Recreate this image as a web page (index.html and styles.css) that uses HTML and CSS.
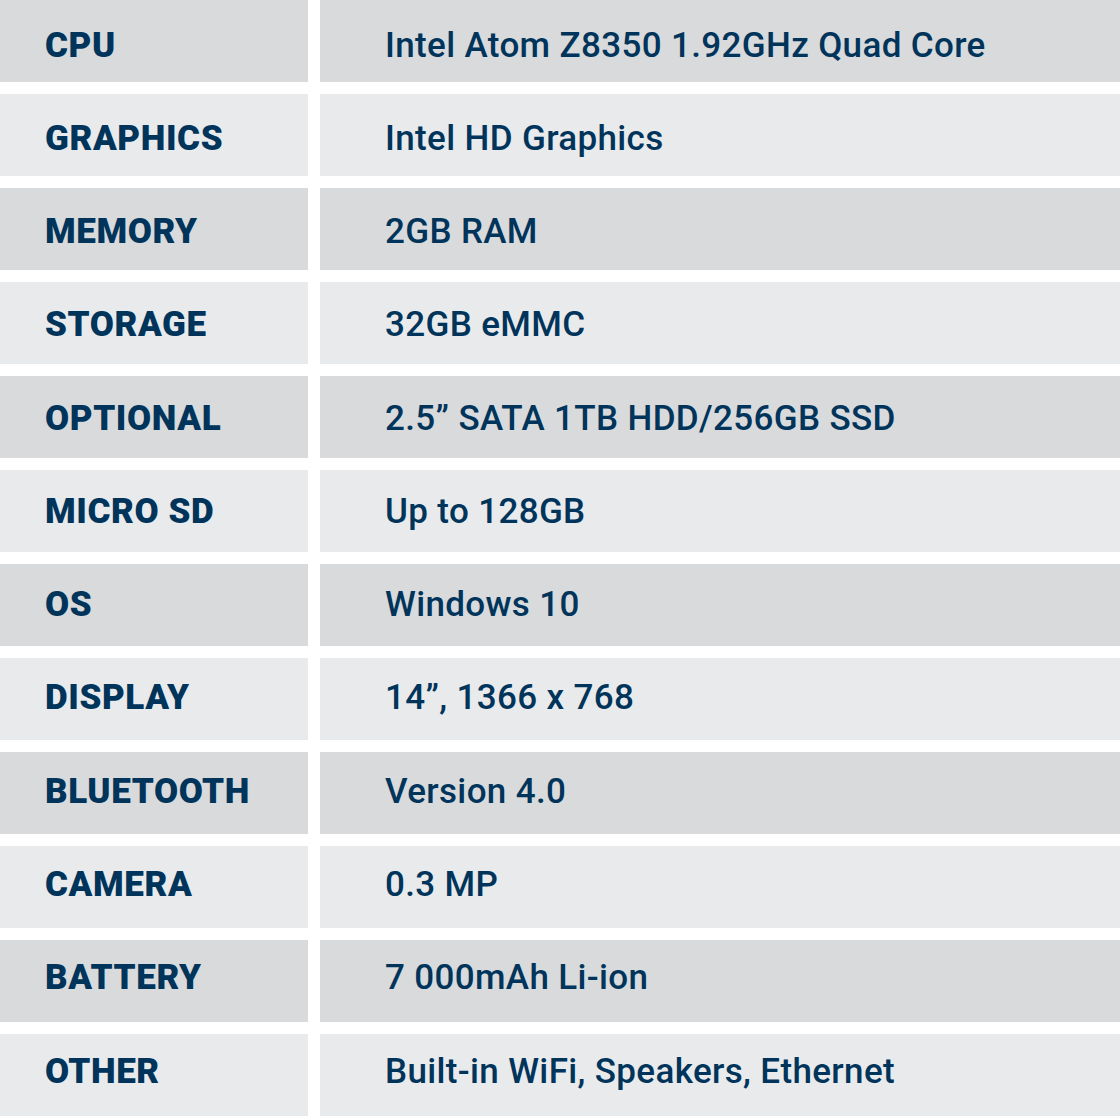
FILE: index.html
```html
<!DOCTYPE html>
<html>
<head>
<meta charset="utf-8">
<link rel="stylesheet" href="styles.css">
</head>
<body>
<div class="specs">
  <div class="row dark"><div class="label">CPU</div><div class="value">Intel Atom Z8350 1.92GHz Quad Core</div></div>
  <div class="row light"><div class="label">GRAPHICS</div><div class="value">Intel HD Graphics</div></div>
  <div class="row dark"><div class="label">MEMORY</div><div class="value">2GB RAM</div></div>
  <div class="row light"><div class="label">STORAGE</div><div class="value">32GB eMMC</div></div>
  <div class="row dark"><div class="label">OPTIONAL</div><div class="value">2.5” SATA 1TB HDD/256GB SSD</div></div>
  <div class="row light"><div class="label">MICRO SD</div><div class="value">Up to 128GB</div></div>
  <div class="row dark"><div class="label">OS</div><div class="value">Windows 10</div></div>
  <div class="row light"><div class="label">DISPLAY</div><div class="value">14”, 1366 x 768</div></div>
  <div class="row dark"><div class="label">BLUETOOTH</div><div class="value">Version 4.0</div></div>
  <div class="row light"><div class="label">CAMERA</div><div class="value">0.3 MP</div></div>
  <div class="row dark"><div class="label">BATTERY</div><div class="value">7 000mAh Li-ion</div></div>
  <div class="row light"><div class="label">OTHER</div><div class="value">Built-in WiFi, Speakers, Ethernet</div></div>
</div>
</body>
</html>
```
FILE: styles.css
```css
html, body {
  margin: 0;
  padding: 0;
  background: #ffffff;
}
.specs {
  display: flex;
  flex-direction: column;
  gap: 12px;
  width: 1120px;
  font-family: Roboto, "Liberation Sans", sans-serif;
  color: #00345a;
}
.row {
  display: grid;
  grid-template-columns: 308px 1fr;
  column-gap: 12px;
  height: 82px;
  --pt: 27.5px;
}
.row.dark .label, .row.dark .value { background: #d9dadc; }
.row.light .label, .row.light .value { background: #e9eaec; }
.label, .value {
  padding-top: var(--pt);
  box-sizing: border-box;
  font-size: 35px;
  line-height: 35px;
  white-space: nowrap;
}
.label {
  padding-left: 45px;
  font-weight: 900;
  letter-spacing: 0.6px;
}
.value {
  padding-left: 65px;
  font-weight: 500;
  letter-spacing: 0.35px;
}
.row:nth-child(2) { --pt: 26.8px; }
.row:nth-child(3) { --pt: 26px; }
.row:nth-child(4) { --pt: 25.3px; }
.row:nth-child(5) { --pt: 24.6px; }
.row:nth-child(6) { --pt: 23.9px; }
.row:nth-child(7) { --pt: 23.1px; }
.row:nth-child(8) { --pt: 22.4px; }
.row:nth-child(9) { --pt: 21.7px; }
.row:nth-child(10) { --pt: 21px; }
.row:nth-child(11) { --pt: 20.2px; }
.row:nth-child(12) { --pt: 19.5px; }
```
